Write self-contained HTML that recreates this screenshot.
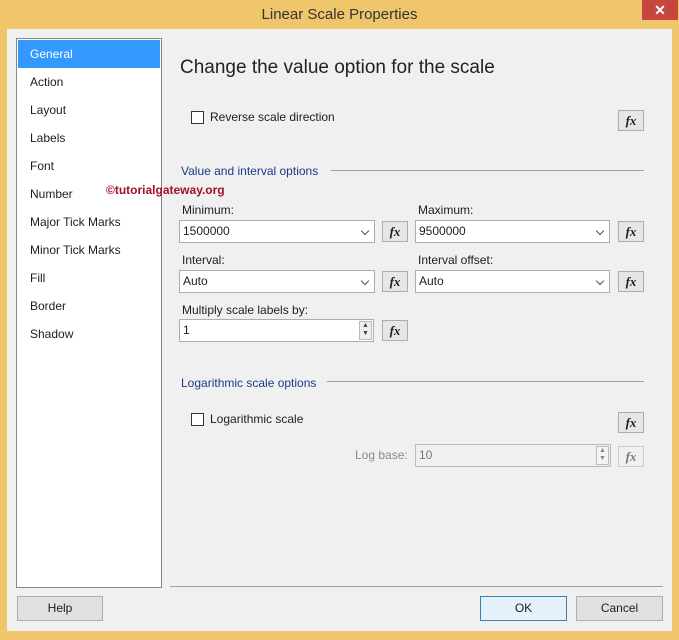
<!DOCTYPE html>
<html><head><meta charset="utf-8"><style>
*{box-sizing:border-box;margin:0;padding:0}
body{width:679px;height:640px;background:#efc66b;font-family:"Liberation Sans",sans-serif;font-size:12px;color:#1e1e1e;position:relative;overflow:hidden}
.a{position:absolute}
.title{left:0;top:6px;width:679px;text-align:center;font-size:15px;color:#333}
.close{left:642px;top:0;width:36px;height:20px;background:#c7463e;color:#fff;text-align:center;font-size:14px;line-height:20px;font-weight:bold}
.client{left:7px;top:29px;width:665px;height:602px;background:#f0f0f0}
.list{left:16px;top:38px;width:146px;height:550px;background:#fff;border:1px solid #828790}
.item{position:absolute;left:1px;width:142px;height:28px;line-height:28px;padding-left:12px;font-size:12px}
.sel{background:#3399ff;color:#fff}
.box{position:absolute;background:#fff;border:1px solid #abadb3;height:23px;line-height:21px;padding-left:3px;font-size:12px}
.dd::after{content:"";position:absolute;right:6px;top:7px;width:5px;height:5px;border-right:1.3px solid #555;border-bottom:1.3px solid #555;transform:rotate(45deg)}
.fx{position:absolute;width:26px;height:21px;background:#e6e6e6;border:1px solid #adadad;font-family:"Liberation Serif",serif;font-style:italic;font-weight:bold;font-size:13px;text-align:center;line-height:19px}
.lbl{position:absolute;font-size:12px}
.sec{position:absolute;color:#1c3a8c;font-size:12px}
.line{position:absolute;height:1px;background:#a0a0a0}
.cb{position:absolute;width:13px;height:13px;border:1px solid #333;background:#fff}
.spin{position:absolute;width:13px;height:19px;border:1px solid #bbb;background:#eee;font-size:7px;line-height:8px;text-align:center;color:#444}
.btn{position:absolute;height:25px;background:#e1e1e1;border:1px solid #adadad;text-align:center;line-height:23px;font-size:12px}
</style></head><body>
<div class="a title">Linear Scale Properties</div>
<div class="a close">✕</div>
<div class="a client"></div>
<div class="a list">
<div class="item sel" style="top:1px">General</div>
<div class="item" style="top:29px">Action</div>
<div class="item" style="top:57px">Layout</div>
<div class="item" style="top:85px">Labels</div>
<div class="item" style="top:113px">Font</div>
<div class="item" style="top:141px">Number</div>
<div class="item" style="top:169px">Major Tick Marks</div>
<div class="item" style="top:197px">Minor Tick Marks</div>
<div class="item" style="top:225px">Fill</div>
<div class="item" style="top:253px">Border</div>
<div class="item" style="top:281px">Shadow</div>
</div>
<div class="a" style="left:106px;top:183px;color:#a0102a;font-weight:bold;font-size:12px">©tutorialgateway.org</div>
<div class="a" style="left:180px;top:57px;font-size:19px;color:#222">Change the value option for the scale</div>
<div class="cb" style="left:191px;top:111px"></div>
<div class="lbl" style="left:210px;top:110px">Reverse scale direction</div>
<div class="fx" style="left:618px;top:110px">fx</div>
<div class="sec" style="left:181px;top:164px">Value and interval options</div>
<div class="line" style="left:331px;top:170px;width:313px"></div>
<div class="lbl" style="left:182px;top:203px">Minimum:</div>
<div class="box dd" style="left:179px;top:220px;width:196px">1500000</div>
<div class="fx" style="left:382px;top:221px">fx</div>
<div class="lbl" style="left:418px;top:203px">Maximum:</div>
<div class="box dd" style="left:415px;top:220px;width:195px">9500000</div>
<div class="fx" style="left:618px;top:221px">fx</div>
<div class="lbl" style="left:182px;top:253px">Interval:</div>
<div class="box dd" style="left:179px;top:270px;width:196px">Auto</div>
<div class="fx" style="left:382px;top:271px">fx</div>
<div class="lbl" style="left:418px;top:253px">Interval offset:</div>
<div class="box dd" style="left:415px;top:270px;width:195px">Auto</div>
<div class="fx" style="left:618px;top:271px">fx</div>
<div class="lbl" style="left:182px;top:303px">Multiply scale labels by:</div>
<div class="box" style="left:179px;top:319px;width:195px">1</div>
<div class="spin" style="left:359px;top:321px">▲<br>▼</div>
<div class="fx" style="left:382px;top:320px">fx</div>
<div class="sec" style="left:181px;top:376px">Logarithmic scale options</div>
<div class="line" style="left:327px;top:381px;width:317px"></div>
<div class="cb" style="left:191px;top:413px"></div>
<div class="lbl" style="left:210px;top:412px">Logarithmic scale</div>
<div class="fx" style="left:618px;top:412px">fx</div>
<div class="lbl" style="left:355px;top:448px;color:#8a8a8a">Log base:</div>
<div class="box" style="left:415px;top:444px;width:196px;background:#f0f0f0;border-color:#bbb;color:#777">10</div>
<div class="spin" style="left:596px;top:446px;background:#f4f4f4;color:#888">▲<br>▼</div>
<div class="fx" style="left:618px;top:446px;background:#f0f0f0;border-color:#ccc;color:#777">fx</div>
<div class="line" style="left:170px;top:586px;width:493px;background:#a0a0a0"></div>
<div class="btn" style="left:17px;top:596px;width:86px">Help</div>
<div class="btn" style="left:480px;top:596px;width:87px;background:#e5f1fb;border-color:#3c7fb1">OK</div>
<div class="btn" style="left:576px;top:596px;width:87px">Cancel</div>
</body></html>
